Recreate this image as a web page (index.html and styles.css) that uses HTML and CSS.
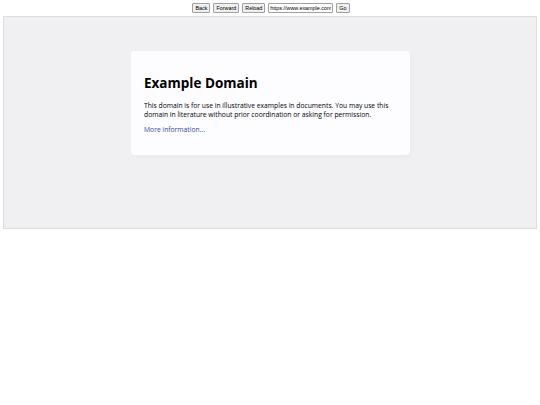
FILE: index.html
```html
<!DOCTYPE html>
<html>
<head>
<meta charset="utf-8">
<link rel="stylesheet" href="styles.css">
</head>
<body>
<div class="toolbar">
  <button class="btn">Back</button>
  <button class="btn">Forward</button>
  <button class="btn">Reload</button>
  <input class="url" type="text" value="https://www.example.com">
  <button class="btn">Go</button>
</div>
<div class="frame">
  <div class="card">
    <h1 class="title">Example Domain</h1>
    <p class="text">This domain is for use in illustrative examples in documents. You may use this domain in literature without prior coordination or asking for permission.</p>
    <p class="text"><a class="link" href="#">More information...</a></p>
  </div>
</div>
</body>
</html>
```

FILE: styles.css
```css
html, body {
  margin: 0;
  padding: 0;
  background: #ffffff;
}
.toolbar {
  display: flex;
  justify-content: center;
  align-items: center;
  gap: 3px;
  height: 15px;
  padding-left: 2px;
}
.btn {
  font-family: "Liberation Sans", Arial, sans-serif;
  font-size: 5.4px;
  height: 10px;
  padding: 0 2px;
  margin: 0;
  border: 1px solid #a0a0a0;
  border-radius: 1px;
  background: #efefef;
  color: #000;
  line-height: 8px;
}
.url {
  font-family: "Liberation Sans", Arial, sans-serif;
  font-size: 5.4px;
  width: 65px;
  height: 10px;
  box-sizing: border-box;
  padding: 0 1px;
  margin: 0;
  border: 1px solid #a0a0a0;
  border-radius: 1px;
  color: #000;
}
.frame {
  margin: 1px 3px 0 3px;
  height: 211px;
  border: 1px solid #dcdcdc;
  background: #f0f0f2;
  font-family: "Open Sans", "Noto Sans", sans-serif;
  font-size: 6.75px;
  display: flow-root;
}
.card {
  width: 252px;
  margin: 34px auto 0 auto;
  padding: 13.5px;
  background: #fdfdff;
  border-radius: 3.4px;
  box-shadow: 1px 1.5px 3.5px 1px rgba(0,0,0,0.02);
}
.title {
  font-size: 2em;
  margin: 0.67em 0;
  font-weight: 700;
  color: #000;
}
.text {
  margin: 1em 0;
  color: #000;
}
.link {
  color: #38488f;
  text-decoration: none;
}
```
